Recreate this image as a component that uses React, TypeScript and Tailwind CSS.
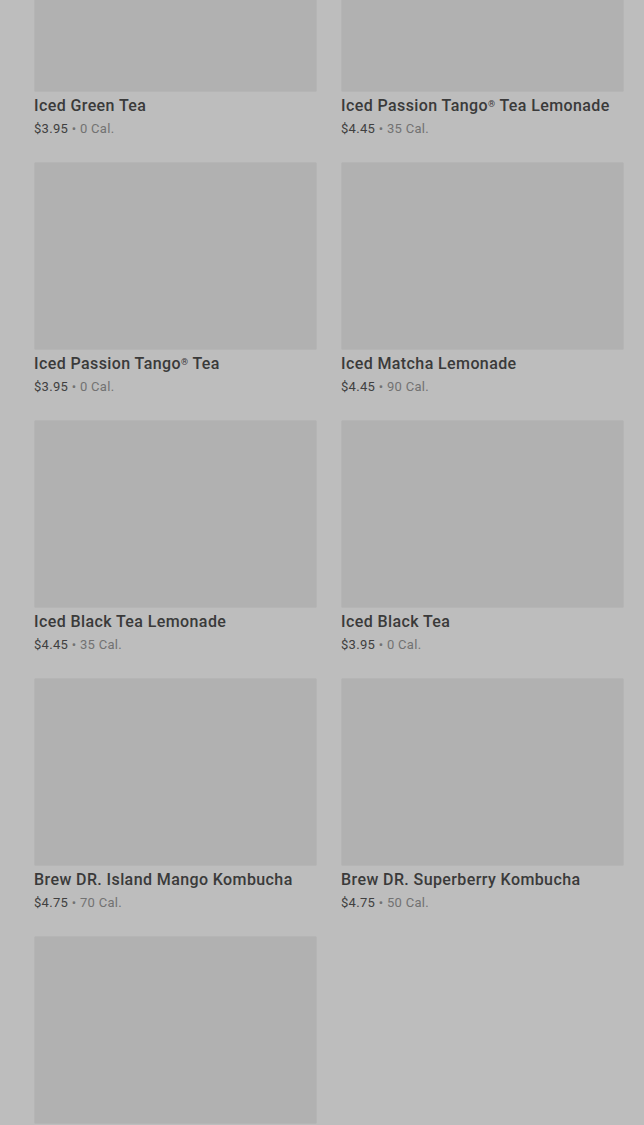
const items = [
  { name: 'Iced Green Tea', price: '$3.95', cal: '0 Cal.' },
  { name: 'Iced Passion Tango', reg: true, rest: ' Tea Lemonade', price: '$4.45', cal: '35 Cal.' },
  { name: 'Iced Passion Tango', reg: true, rest: ' Tea', price: '$3.95', cal: '0 Cal.' },
  { name: 'Iced Matcha Lemonade', price: '$4.45', cal: '90 Cal.' },
  { name: 'Iced Black Tea Lemonade', price: '$4.45', cal: '35 Cal.' },
  { name: 'Iced Black Tea', price: '$3.95', cal: '0 Cal.' },
  { name: 'Brew DR. Island Mango Kombucha', price: '$4.75', cal: '70 Cal.' },
  { name: 'Brew DR. Superberry Kombucha', price: '$4.75', cal: '50 Cal.' },
];

const Thumb = () => (
  <div className="h-[188px] bg-[#b1b1b1] border border-[#b5b5b5] rounded-[2px]"></div>
);

const App = () => {
  return (
    <div className="h-[1125px] overflow-hidden bg-[#bdbdbd] font-['Roboto',sans-serif]">
      <div className="-mt-[96px] pl-[34px] pr-[20px] grid grid-cols-2 gap-x-[24px] gap-y-[23px]">
        {items.map((item, i) => (
          <div key={i} className="flex flex-col">
            <Thumb />
            <h3 className="mt-[1px] text-[16px] leading-[25px] font-medium tracking-[0.4px] text-[#3a3a3a] whitespace-nowrap">
              {item.name}
              {item.reg && <sup className="text-[9px] -top-[0.5em]">®</sup>}
              {item.rest}
            </h3>
            <p className="mt-[1px] text-[13px] leading-5 tracking-[0.3px] text-[#404040]">
              {item.price} <span className="text-[#727272]">• {item.cal}</span>
            </p>
          </div>
        ))}
        {/* last card, cut off at the bottom of the view */}
        <div className="flex flex-col">
          <Thumb />
        </div>
      </div>
    </div>
  );
};

export default App;
